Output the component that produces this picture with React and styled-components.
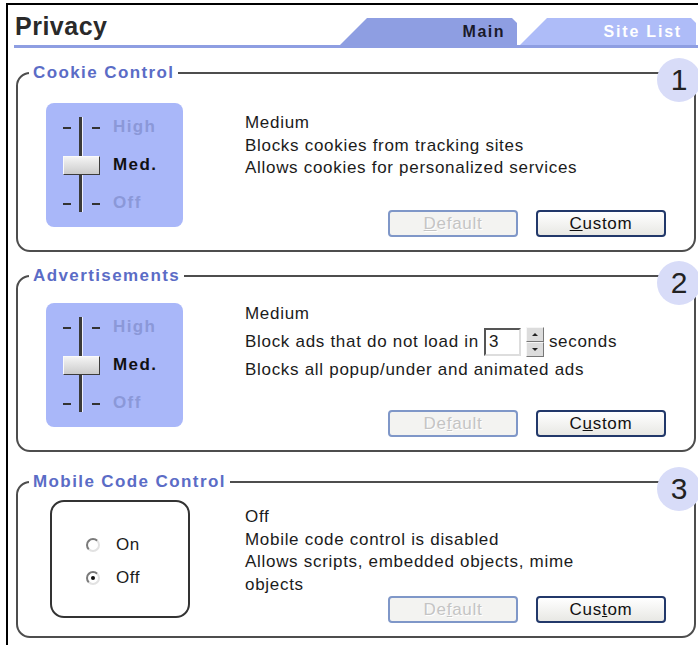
import React from "react";
import styled, { createGlobalStyle } from "styled-components";

const GlobalStyle = createGlobalStyle`
  html, body {
    margin: 0;
    padding: 0;
    background: #fff;
  }
  body {
    font-family: "Liberation Sans", Arial, sans-serif;
    color: #1b1b1b;
  }
`;

const Frame = styled.div`
  margin: 3px 0 0 6px;
  height: 642px;
  box-sizing: border-box;
  border-left: 2px solid #000;
  border-top: 2px solid #000;
  overflow: hidden;
`;

const Header = styled.div`
  display: flex;
  align-items: flex-end;
  height: 40px;
  margin-left: 6px;
  border-bottom: 3px solid #8e9ee2;
`;

const Title = styled.h1`
  align-self: flex-start;
  margin: 6px 0 0 1px;
  font-size: 25px;
  line-height: 30px;
  font-weight: bold;
  letter-spacing: 0.5px;
  color: #2a2a2a;
`;

const Tabs = styled.div`
  display: flex;
  align-items: flex-end;
  margin-left: auto;
  margin-right: 2px;
  gap: 3px;
`;

const Tab = styled.div`
  width: ${p => p.$w}px;
  height: 27px;
  box-sizing: border-box;
  padding-right: ${p => (p.$active ? 12 : 14)}px;
  text-align: right;
  font-size: 16px;
  line-height: 27px;
  font-weight: bold;
  letter-spacing: ${p => (p.$active ? 1.5 : 1.8)}px;
  color: ${p => (p.$active ? "#1a1a2a" : "#fff")};
  background: ${p => (p.$active ? "#8e9ee2" : "#aebcf8")};
  clip-path: polygon(0 100%, 27px 0, calc(100% - 5px) 0, 100% 5px, 100% 100%);
`;

const Panel = styled.section`
  position: relative;
  box-sizing: border-box;
  width: 680px;
  height: ${p => p.$h}px;
  margin: ${p => p.$mt}px 0 0 8px;
  padding: ${p => p.$pt}px 28px 13px 28px;
  border: 2px solid #4d4d4d;
  border-radius: 14px;
  display: grid;
  grid-template-columns: 199px 1fr;
`;

const Legend = styled.h2`
  position: absolute;
  top: -11px;
  left: 11px;
  margin: 0;
  padding: 0 4px;
  background: #fff;
  font-size: 17px;
  line-height: 20px;
  font-weight: bold;
  letter-spacing: 1.4px;
  color: #5b6cc6;
`;

const Badge = styled.div`
  position: absolute;
  top: -16px;
  right: -7px;
  width: 44px;
  height: 44px;
  border-radius: 50%;
  background: #d8dcf8;
  display: flex;
  align-items: center;
  justify-content: center;
  font-size: 30px;
  color: #222;
`;

const SliderBox = styled.div`
  align-self: start;
  width: 137px;
  height: 124px;
  box-sizing: border-box;
  background: #a9b7f9;
  border-radius: 8px;
  display: flex;
  padding: 14px 0 0 17px;
`;

const Track = styled.div`
  position: relative;
  flex: none;
  width: 37px;
  height: 95px;
`;

const Rail = styled.div`
  position: absolute;
  left: 16px;
  top: 0;
  bottom: 0;
  width: 3px;
  background: #3a3a3a;
  border-right: 1px solid #eef0ff;
`;

const Tick = styled.div`
  position: absolute;
  top: ${p => p.$y}px;
  ${p => (p.$right ? "right: 0;" : "left: 0;")}
  width: 8px;
  height: 2px;
  background: #333;
`;

const Thumb = styled.div`
  position: absolute;
  left: 0;
  top: 39px;
  width: 37px;
  height: 19px;
  box-sizing: border-box;
  background: linear-gradient(#f4f4f4, #cbcbcb);
  border: 1px solid;
  border-color: #fafafa #3c3c3c #3c3c3c #fafafa;
`;

const Levels = styled.div`
  display: flex;
  flex-direction: column;
  gap: 18px;
  margin-left: 13px;
`;

const Level = styled.span`
  font-size: 17px;
  line-height: 20px;
  font-weight: bold;
  letter-spacing: 1.4px;
  color: ${p => (p.$active ? "#111" : "#8b98d8")};
`;

const ModeBox = styled.div`
  align-self: start;
  width: 140px;
  height: 118px;
  margin-left: 4px;
  box-sizing: border-box;
  border: 2px solid #333;
  border-radius: 14px;
  display: flex;
  flex-direction: column;
  justify-content: center;
  gap: 13px;
  padding: 5px 0 0 34px;
`;

const RadioRow = styled.label`
  display: flex;
  align-items: center;
  gap: 16px;
  font-size: 17px;
  line-height: 20px;
  letter-spacing: 0.6px;
`;

const RadioDot = styled.span`
  position: relative;
  width: 14px;
  height: 14px;
  box-sizing: border-box;
  border-radius: 50%;
  border: 2px solid;
  border-color: #7a7a7a #e2e2e2 #e2e2e2 #7a7a7a;
  background: #fff;

  &::after {
    content: "";
    display: ${p => (p.$on ? "block" : "none")};
    position: absolute;
    left: 3px;
    top: 3px;
    width: 4px;
    height: 4px;
    border-radius: 50%;
    background: #111;
  }
`;

const Info = styled.div`
  display: flex;
  flex-direction: column;
  padding-top: ${p => p.$lead}px;
  font-size: 17px;
  line-height: 22.5px;
  letter-spacing: 0.7px;
`;

const Line = styled.div``;

const SpinLine = styled.div`
  display: flex;
  align-items: center;
  height: 33px;
`;

const NumField = styled.div`
  width: 37px;
  height: 28px;
  box-sizing: border-box;
  margin-left: 5px;
  padding-left: 3px;
  border: 2px solid;
  border-color: #555 #ddd #ddd #555;
  background: #fff;
  line-height: 24px;
`;

const Spinner = styled.div`
  display: flex;
  flex-direction: column;
  margin: 0 5px;
  width: 18px;
  height: 30px;
`;

const SpinBtn = styled.div`
  flex: 1;
  display: flex;
  align-items: center;
  justify-content: center;
  box-sizing: border-box;
  background: #dcdcdc;
  border: 1px solid;
  border-color: #f6f6f6 #777 #777 #f6f6f6;

  &::after {
    content: "";
    border-left: 3px solid transparent;
    border-right: 3px solid transparent;
    ${p =>
      p.$down ? "border-top: 3px solid #222;" : "border-bottom: 3px solid #222;"}
  }
`;

const Buttons = styled.div`
  margin-top: auto;
  display: flex;
  justify-content: flex-end;
  gap: 18px;
`;

const Btn = styled.button`
  width: 130px;
  height: 27px;
  box-sizing: border-box;
  padding: 0;
  border-radius: 4px;
  border: 2px solid ${p => (p.disabled ? "#7f97c8" : "#22386a")};
  background: ${p =>
    p.disabled ? "#f3f3f1" : "linear-gradient(#ffffff, #e8e8e4)"};
  color: ${p => (p.disabled ? "#c4c4c4" : "#111")};
  text-shadow: ${p => (p.disabled ? "1px 1px 0 #fff" : "none")};
  font-family: "Liberation Sans", Arial, sans-serif;
  font-size: 17px;
  letter-spacing: 0.7px;

  u {
    text-decoration-thickness: 1px;
  }
`;

const labelWithKey = (text, key) => {
  const i = text.indexOf(key);
  if (i < 0) return text;
  return (
    <>
      {text.slice(0, i)}
      <u>{key}</u>
      {text.slice(i + 1)}
    </>
  );
};

const Slider = () => (
  <SliderBox>
    <Track>
      <Rail />
      <Tick $y={10} />
      <Tick $y={10} $right />
      <Tick $y={86} />
      <Tick $y={86} $right />
      <Thumb />
    </Track>
    <Levels>
      <Level>High</Level>
      <Level $active>Med.</Level>
      <Level>Off</Level>
    </Levels>
  </SliderBox>
);

const ActionButtons = ({ defKey, customKey }) => (
  <Buttons>
    <Btn disabled>{labelWithKey("Default", defKey)}</Btn>
    <Btn>{labelWithKey("Custom", customKey)}</Btn>
  </Buttons>
);

export default function App() {
  return (
    <>
      <GlobalStyle />
      <Frame>
        <Header>
          <Title>Privacy</Title>
          <Tabs>
            <Tab $w={177} $active>Main</Tab>
            <Tab $w={176}>Site List</Tab>
          </Tabs>
        </Header>

        <Panel $h={180} $mt={24} $pt={29}>
          <Legend>Cookie Control</Legend>
          <Badge>1</Badge>
          <Slider />
          <Info $lead={9}>
            <Line>Medium</Line>
            <Line>Blocks cookies from tracking sites</Line>
            <Line>Allows cookies for personalized services</Line>
            <ActionButtons defKey="D" customKey="C" />
          </Info>
        </Panel>

        <Panel $h={177} $mt={23} $pt={26}>
          <Legend>Advertisements</Legend>
          <Badge>2</Badge>
          <Slider />
          <Info $lead={0}>
            <Line>Medium</Line>
            <SpinLine>
              Block ads that do not load in
              <NumField>3</NumField>
              <Spinner>
                <SpinBtn />
                <SpinBtn $down />
              </Spinner>
              seconds
            </SpinLine>
            <Line>Blocks all popup/under and animated ads</Line>
            <ActionButtons defKey="f" customKey="u" />
          </Info>
        </Panel>

        <Panel $h={157} $mt={29} $pt={17}>
          <Legend>Mobile Code Control</Legend>
          <Badge>3</Badge>
          <ModeBox>
            <RadioRow>
              <RadioDot />
              On
            </RadioRow>
            <RadioRow>
              <RadioDot $on />
              Off
            </RadioRow>
          </ModeBox>
          <Info $lead={6}>
            <Line>Off</Line>
            <Line>Mobile code control is disabled</Line>
            <Line>
              Allows scripts, embedded objects, mime
              <br />
              objects
            </Line>
            <ActionButtons defKey="f" customKey="t" />
          </Info>
        </Panel>
      </Frame>
    </>
  );
}
